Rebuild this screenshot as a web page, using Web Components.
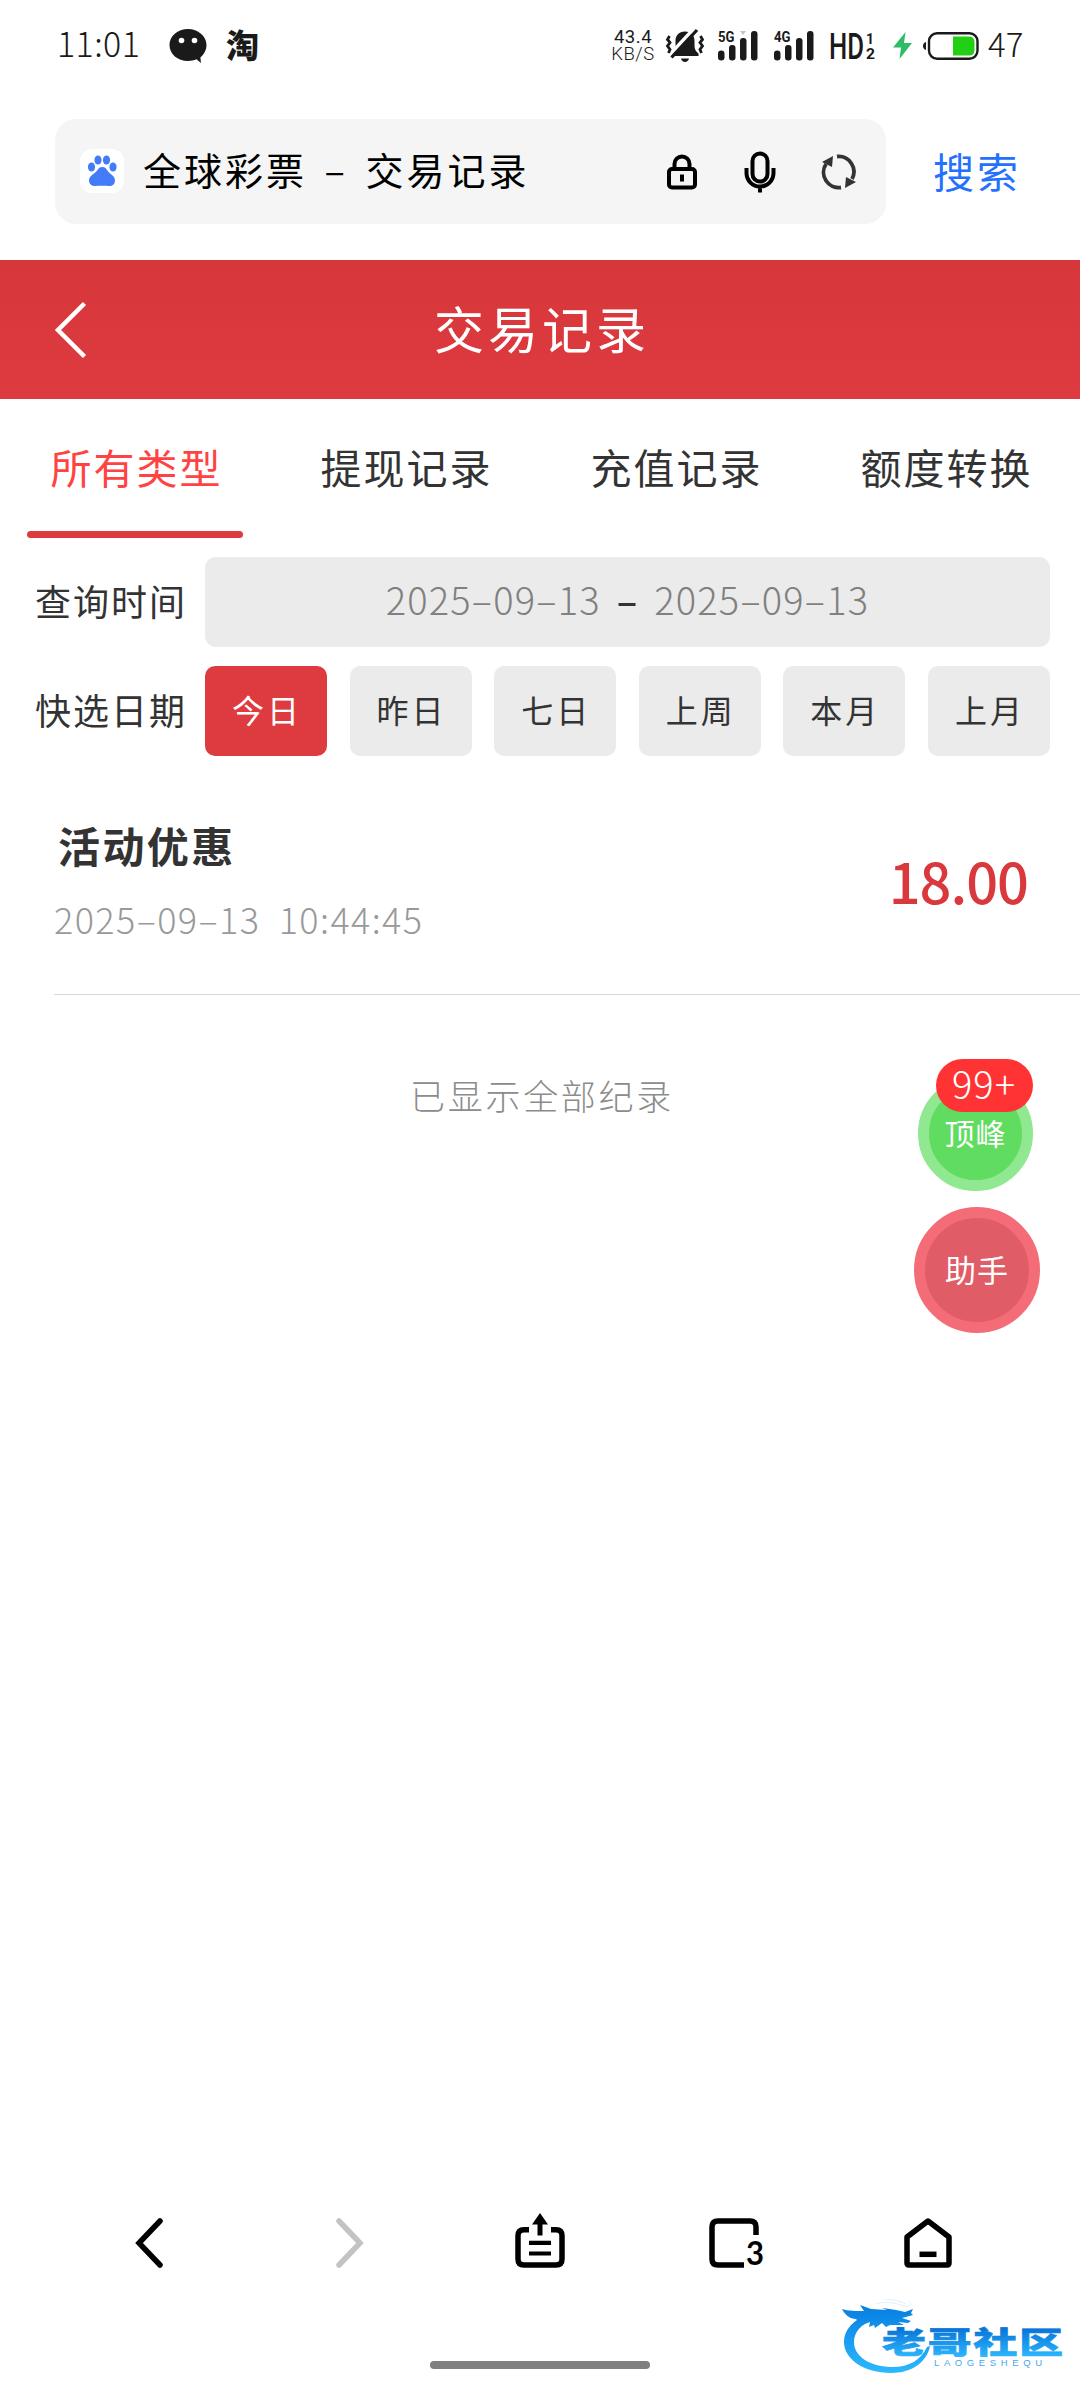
<!DOCTYPE html>
<html lang="zh-CN">
<head>
<meta charset="utf-8">
<title>交易记录</title>
<style>
  body {
    margin: 0;
    width: 1080px;
    height: 2400px;
    overflow: hidden;
    background: #fff;
    color: #333;
    font-family: "Noto Sans CJK SC", sans-serif;
    line-height: 1;
  }
</style>
</head>
<body>
<app-screen>
  <status-bar slot="top" time="11:01" speed="43.4" battery="47"></status-bar>
  <address-bar slot="top" action="搜索">全球彩票 – 交易记录</address-bar>

  <page-header>交易记录</page-header>
  <tab-bar>
    <tab-item active>所有类型</tab-item>
    <tab-item>提现记录</tab-item>
    <tab-item>充值记录</tab-item>
    <tab-item>额度转换</tab-item>
  </tab-bar>
  <filter-row label="查询时间">
    <date-range from="2025–09–13" to="2025–09–13"></date-range>
  </filter-row>
  <filter-row label="快选日期">
    <quick-date active>今日</quick-date>
    <quick-date>昨日</quick-date>
    <quick-date>七日</quick-date>
    <quick-date>上周</quick-date>
    <quick-date>本月</quick-date>
    <quick-date>上月</quick-date>
  </filter-row>
  <record-item name="活动优惠" time="2025–09–13 10:44:45" amount="18.00"></record-item>
  <list-end>已显示全部纪录</list-end>

  <float-stack slot="overlay">
    <float-button color="green" badge="99+">顶峰</float-button>
    <float-button color="red">助手</float-button>
  </float-stack>
  <browser-nav slot="bottom" tabs="3"></browser-nav>
  <community-logo slot="overlay"></community-logo>
</app-screen>

<script>
class BaseElement extends HTMLElement {
  constructor() {
    super();
    this._shadowRoot = this.attachShadow({ mode: "open" });
  }

  connectedCallback() {
    this._shadowRoot.innerHTML = this.template();
  }

  attr(name) {
    return this.getAttribute(name) || "";
  }
}

class AppScreen extends BaseElement {
  template() {
    return `
      <style>
        :host {
          display: flex;
          flex-direction: column;
          position: relative;
          width: 1080px;
          height: 2400px;
        }
        main { flex: 1; }
      </style>
      <slot name="top"></slot>
      <main><slot></slot></main>
      <slot name="bottom"></slot>
      <slot name="overlay"></slot>
    `;
  }
}

class SignalBars extends BaseElement {
  template() {
    const mark = this.hasAttribute("mark")
      ? `<path d="M22 4h6l-3 4z" fill="#c4c4c4"/>`
      : "";
    return `
      <style>
        :host { display: block; width: 41px; height: 38px; }
        svg { display: block; overflow: visible; }
      </style>
      <svg width="41" height="38" viewBox="0 0 41 38" fill="#1a1a1a">
        <rect x="0" y="23.500" width="6.500" height="10" rx="3.200"/>
        <rect x="11" y="18" width="6.500" height="15.500" rx="3"/>
        <rect x="22" y="11" width="6.500" height="22.500" rx="3"/>
        <rect x="33" y="4" width="6.500" height="29.500" rx="3"/>
        ${mark}
        <text x="0" y="14.500" font-family="Roboto" font-size="14.500" font-weight="700" textLength="16.500" lengthAdjust="spacingAndGlyphs">${this.attr("network")}</text>
      </svg>
    `;
  }
}

class StatusBar extends BaseElement {
  template() {
    return `
      <style>
        :host {
          display: flex;
          justify-content: space-between;
          align-items: center;
          box-sizing: border-box;
          height: 91px;
          padding: 0 56px 0 57px;
          color: #1a1a1a;
        }
        .group { display: flex; align-items: center; }
        svg { display: block; overflow: visible; }
        .time { width: 112px; font-size: 34px; font-weight: 300; letter-spacing: 0.4px; margin-top: -5px; }
        .tao { margin-left: 19px; font-size: 33px; font-weight: 900; margin-top: -3px; }
        .speed {
          display: flex;
          flex-direction: column;
          align-items: center;
          width: 46px;
          font-family: Roboto, sans-serif;
          font-size: 18.500px;
          line-height: 17px;
        }
        .speed span { letter-spacing: 0.5px; }
        .speed span + span { font-size: 18.500px; font-weight: 300; }
        .bell { margin-left: 10px; }
        signal-bars { margin-left: 14px; }
        signal-bars + signal-bars { margin-left: 15px; }
        .hd { margin-left: 15px; }
        .bolt { margin-left: 18px; }
        .battery { margin-left: 11px; }
        .level { width: 36px; margin-left: 9px; margin-top: -5px; font-size: 33px; font-weight: 300; white-space: nowrap; }
      </style>
      <div class="group">
        <span class="time">${this.attr("time")}</span>
        <svg width="38" height="36" viewBox="0 0 38 36">
          <path d="M19 1C8.500 1 .5 8 .5 17S8.500 33 19 33c3 0 6-.6 8.500-1.700L32 35l-.6-5.500C35 26.500 37.500 22 37.500 17 37.500 8 29 1 19 1z" fill="#1a1a1a"/>
          <circle cx="12.500" cy="12.500" r="2.800" fill="#fff"/>
          <circle cx="25.500" cy="12.500" r="2.800" fill="#fff"/>
        </svg>
        <span class="tao">淘</span>
      </div>
      <div class="group">
        <div class="speed"><span>${this.attr("speed")}</span><span>KB/S</span></div>
        <svg class="bell" width="38" height="34" viewBox="0 0 38 34" fill="#1a1a1a">
          <path d="M19 2.500c-6 0-9.500 4-9.500 9v5c0 4-1.500 6-4 8V27h27v-2.500c-2.500-2-4-4-4-8v-5c0-5-3.500-9-9.500-9z"/>
          <path d="M15 29.500h8c-.5 2.200-2 3.500-4 3.500s-3.500-1.300-4-3.500z"/>
          <path d="M3 26.500L28.500 -1" stroke="#fff" stroke-width="3.500"/>
          <path d="M5.500 28.500L31 1" stroke="#1a1a1a" stroke-width="3.200"/>
          <path d="M3.500 7l-2 3.500 2.500 3L1.500 17 4 20.500 2.500 24M34.500 7l2 3.500-2.500 3 2.500 3.500-2.500 3.500 1.500 3.500" fill="none" stroke="#1a1a1a" stroke-width="2.800"/>
        </svg>
        <signal-bars network="5G" mark></signal-bars>
        <signal-bars network="4G"></signal-bars>
        <svg class="hd" width="45" height="46" viewBox="0 0 45 46" fill="#1a1a1a" font-family="Roboto" font-weight="700">
          <text x="-1" y="36" font-size="36" font-weight="500" textLength="35" lengthAdjust="spacingAndGlyphs">HD</text>
          <text x="36" y="21" font-size="15" textLength="8" lengthAdjust="spacingAndGlyphs">1</text>
          <text x="36" y="36" font-size="15" textLength="9" lengthAdjust="spacingAndGlyphs">2</text>
        </svg>
        <svg class="bolt" width="19" height="27" viewBox="0 0 19 27">
          <path d="M12.500 0L0 15.500h8L6.500 27 19 11h-8z" fill="#2dbd66"/>
        </svg>
        <svg class="battery" width="56" height="28" viewBox="0 0 56 28">
          <path d="M3 10v8c-2-.5-3-2-3-4s1-3.500 3-4z" fill="#1a1a1a"/>
          <rect x="6" y="1.200" width="48.500" height="25.500" rx="8" fill="#fff" stroke="#1a1a1a" stroke-width="2.400"/>
          <path d="M30 4.500h16q5.500 0 5.500 5.500v8q0 5.500-5.500 5.500H30z" fill="#22cf14"/>
        </svg>
        <span class="level">${this.attr("battery")}</span>
      </div>
    `;
  }
}

class AddressBar extends BaseElement {
  template() {
    return `
      <style>
        :host {
          display: flex;
          align-items: center;
          box-sizing: border-box;
          height: 169px;
          padding: 28px 59px 36px 55px;
        }
        .field {
          display: flex;
          align-items: center;
          box-sizing: border-box;
          width: 832px;
          height: 105px;
          padding: 0 29px 0 25px;
          border-radius: 21px;
          background: #f5f5f5;
        }
        svg { display: block; flex: none; }
        .engine { width: 44px; height: 44px; border-radius: 12px; background: #fff; margin-top: -2px; }
        .title { flex: 1; margin: -6px 0 0 19px; color: #000; font-size: 38px; letter-spacing: 3px; word-spacing: 6px; white-space: nowrap; }
        .mic { margin: 0 45px 0 47px; }
        .action { margin: -3px 0 0 47px; color: #2470ff; font-size: 41px; letter-spacing: 3px; white-space: nowrap; }
      </style>
      <div class="field">
        <svg class="engine" viewBox="0 0 44 44" fill="#447cf8">
          <ellipse cx="11.500" cy="18" rx="3.600" ry="4.600"/>
          <ellipse cx="18" cy="11" rx="3.600" ry="4.600"/>
          <ellipse cx="26.500" cy="11" rx="3.600" ry="4.600"/>
          <ellipse cx="33" cy="18" rx="3.600" ry="4.600"/>
          <path d="M22.300 18c3 0 4.200 2.200 5.700 4.200 2 2.700 7 4.800 7 9.300 0 4-3 5.700-6 5.500-4-.3-9.500-.3-13.500 0-3 .2-6.500-1.500-6.500-5.500 0-4.500 5-6.600 7.500-9.300 1.700-2 2.800-4.200 5.800-4.200z"/>
        </svg>
        <span class="title"><slot></slot></span>
        <svg width="30" height="36" viewBox="0 0 30 36" fill="none" stroke="#000" stroke-width="4">
          <rect x="2" y="15" width="26" height="18.500" rx="3"/>
          <path d="M7.500 15v-5a7.500 7.500 0 0 1 15 0v5M15 20.500v7"/>
        </svg>
        <svg class="mic" width="32" height="42" viewBox="0 0 32 42" fill="none" stroke="#000" stroke-width="4">
          <rect x="8.500" y="2.500" width="15" height="28" rx="7.500"/>
          <path d="M2.500 17v5a13.500 13.500 0 0 0 27 0v-5M16 35v6.500"/>
        </svg>
        <svg width="36" height="36" viewBox="0 0 36 36" fill="none" stroke="#333" stroke-width="3.800">
          <path d="M16 2.500A15.300 15.300 0 0 1 31 25M20 33.500A15.300 15.300 0 0 1 5 10"/>
          <path d="M12 2l-1 11L1 8zM24 34l1-11 10 5z" fill="#333" stroke="none"/>
        </svg>
      </div>
      <span class="action">${this.attr("action")}</span>
    `;
  }
}

class PageHeader extends BaseElement {
  template() {
    return `
      <style>
        :host {
          display: grid;
          grid-template-columns: 140px 1fr 140px;
          align-items: center;
          height: 139px;
          background: linear-gradient(#d7363a, #dd3b40);
          color: #fff;
        }
        svg { display: block; margin-left: 54px; }
        h1 {
          margin: -5px 0 0 4px;
          font-size: 50px;
          font-weight: 400;
          letter-spacing: 4px;
          text-align: center;
        }
      </style>
      <svg width="34" height="58" viewBox="0 0 34 58" fill="none" stroke="#fff" stroke-width="4.500">
        <path d="M30.500 2.500L4 29l26.500 26.500"/>
      </svg>
      <h1><slot></slot></h1>
    `;
  }
}

class TabBar extends BaseElement {
  template() {
    return `
      <style>
        :host { display: grid; grid-template-columns: repeat(4, 1fr); height: 139px; }
      </style>
      <slot></slot>
    `;
  }
}

class TabItem extends BaseElement {
  template() {
    return `
      <style>
        :host {
          display: flex;
          flex-direction: column;
          align-items: center;
          justify-content: space-between;
        }
        span { margin-top: 47px; padding-left: 3px; font-size: 41px; letter-spacing: 2px; color: #333; }
        i { width: 216px; height: 7px; border-radius: 4px; }
        :host([active]) span { color: #ff4343; }
        :host([active]) i { background: #dd3b40; }
      </style>
      <span><slot></slot></span>
      <i></i>
    `;
  }
}

class FilterRow extends BaseElement {
  template() {
    return `
      <style>
        :host { display: flex; align-items: center; height: 90px; padding: 19px 30px 0 35px; }
        label { width: 170px; margin-top: -4px; font-size: 36px; letter-spacing: 2px; white-space: nowrap; }
        .content { flex: 1; display: flex; justify-content: space-between; }
      </style>
      <label>${this.attr("label")}</label>
      <div class="content"><slot></slot></div>
    `;
  }
}

class DateRange extends BaseElement {
  template() {
    return `
      <style>
        :host {
          flex: 1;
          display: flex;
          justify-content: center;
          align-items: center;
          gap: 16px;
          height: 90px;
          border-radius: 11px;
          background: #ebebeb;
          font-size: 38px;
        }
        span { margin-top: -7px; color: #808080; font-weight: 300; letter-spacing: 1.200px; }
        b { margin-top: -7px; font-weight: 500; letter-spacing: 1px; }
      </style>
      <span>${this.attr("from")}</span><b>–</b><span>${this.attr("to")}</span>
    `;
  }
}

class QuickDate extends BaseElement {
  template() {
    return `
      <style>
        :host {
          display: flex;
          justify-content: center;
          align-items: center;
          box-sizing: border-box;
          width: 122px;
          height: 90px;
          padding: 0 0 4px 2px;
          border-radius: 10px;
          background: #ebebeb;
          font-size: 32px;
          letter-spacing: 3px;
        }
        :host([active]) { background: #dd3b40; color: #fff; }
      </style>
      <slot></slot>
    `;
  }
}

class RecordItem extends BaseElement {
  template() {
    return `
      <style>
        :host {
          display: flex;
          justify-content: space-between;
          align-items: center;
          box-sizing: border-box;
          height: 239px;
          margin-left: 54px;
          padding: 10px 52px 0 0;
          border-bottom: 1px solid #d8d8d8;
        }
        .name { margin: 0 0 34px 4px; font-size: 42px; font-weight: 700; letter-spacing: 2.400px; }
        .time { font-size: 36px; font-weight: 300; color: #999; letter-spacing: 1.400px; word-spacing: 9px; white-space: pre; }
        .amount { font-size: 56px; font-weight: 500; color: #d9383c; letter-spacing: -1px; margin-top: -1px; }
      </style>
      <div>
        <div class="name">${this.attr("name")}</div>
        <div class="time">${this.attr("time")}</div>
      </div>
      <div class="amount">${this.attr("amount")}</div>
    `;
  }
}

class ListEnd extends BaseElement {
  template() {
    return `
      <style>
        :host {
          display: block;
          padding: 82px 0 0 4px;
          font-size: 35px;
          font-weight: 300;
          letter-spacing: 2.700px;
          text-align: center;
          color: #8c8c8c;
        }
      </style>
      <slot></slot>
    `;
  }
}

class FloatStack extends BaseElement {
  template() {
    return `
      <style>
        :host {
          position: absolute;
          top: 1076px;
          left: 914px;
          display: flex;
          flex-direction: column;
          align-items: center;
          gap: 16px;
          width: 126px;
        }
      </style>
      <slot></slot>
    `;
  }
}

class FloatButton extends BaseElement {
  template() {
    const badge = this.attr("badge");
    return `
      <style>
        :host {
          position: relative;
          display: flex;
          justify-content: center;
          align-items: center;
          box-sizing: border-box;
          width: 126px;
          height: 126px;
          padding-bottom: 3px;
          border: 11px solid #f36c78;
          border-radius: 50%;
          background: #e05c66;
          color: #fff;
          font-size: 31px;
          letter-spacing: 1px;
        }
        :host([color="green"]) {
          width: 115px;
          height: 115px;
          margin-right: 3px;
          border-color: #90e890;
          background: #60dc60;
          font-size: 30px;
        }
        .badge {
          position: absolute;
          top: -28px;
          right: -11px;
          box-sizing: border-box;
          width: 97px;
          height: 53px;
          border-radius: 27px;
          background: #ff3333;
          font-size: 38px;
          font-weight: 300;
          line-height: 47px;
          text-align: center;
          text-indent: -1px;
        }
      </style>
      <slot></slot>
      ${badge ? `<span class="badge">${badge}</span>` : ""}
    `;
  }
}

class BrowserNav extends BaseElement {
  template() {
    return `
      <style>
        :host { display: flex; flex-direction: column; align-items: center; height: 187px; }
        nav { display: flex; align-items: flex-start; width: 100%; height: 148px; }
        svg { display: block; flex: none; overflow: visible; }
        .back { margin-left: 135px; }
        .forward { margin-left: 171px; }
        .share { margin-left: 151px; }
        .tabs { margin-left: 144px; }
        .home { margin-left: 139px; }
        .handle { width: 220px; height: 8px; border-radius: 4px; background: #808080; }
      </style>
      <nav>
        <svg class="back" width="29" height="55" viewBox="0 0 29 55" fill="none" stroke="#000" stroke-width="5.500" stroke-linecap="round">
          <path d="M25 8L4 30l21 22"/>
        </svg>
        <svg class="forward" width="29" height="55" viewBox="0 0 29 55" fill="none" stroke="#c3c3c3" stroke-width="5.500" stroke-linecap="round">
          <path d="M4 8l21 22L4 52"/>
        </svg>
        <svg class="share" width="50" height="55" viewBox="0 0 50 55" fill="none" stroke="#000" stroke-width="5.500">
          <path d="M14 16.800H9q-6 0-6 6V46q0 6 6 6h32q6 0 6-6V22.800q0-6-6-6h-5"/>
          <path d="M25 8v14.500" stroke-width="5"/>
          <path d="M25 0l8 11.500H17z" fill="#000" stroke="none"/>
          <path d="M14 29.800h22M14 40.500h22" stroke-width="4.200"/>
        </svg>
        <svg class="tabs" width="56" height="62" viewBox="0 0 56 62" fill="none" stroke="#000" stroke-width="5.500">
          <path d="M35 52H9q-6 0-6-6V14q0-6 6-6h32q6 0 6 6v8"/>
          <text x="37" y="51.500" font-family="Lato" font-size="33" font-weight="700" fill="#000" stroke="none" textLength="18" lengthAdjust="spacingAndGlyphs">${this.attr("tabs")}</text>
        </svg>
        <svg class="home" width="48" height="55" viewBox="0 0 48 55" fill="none" stroke="#000" stroke-width="5.500" stroke-linejoin="round">
          <path d="M24 8L3 24v26q0 2 2 2h38q2 0 2-2V24z"/>
          <path d="M15.500 41.300h17"/>
        </svg>
      </nav>
      <div class="handle"></div>
    `;
  }
}

// Watermark over the bottom right corner: dragon ring with the site name.
class CommunityLogo extends BaseElement {
  template() {
    return `
      <style>
        :host { position: absolute; left: 840px; top: 2296px; }
        svg { display: block; overflow: visible; }
      </style>
      <svg width="226" height="82" viewBox="0 0 226 82">
        <defs>
          <linearGradient id="ring" gradientUnits="userSpaceOnUse" x1="0" y1="12" x2="0" y2="76">
            <stop offset="0" stop-color="#0880e2"/>
            <stop offset="1" stop-color="#2cb8ff"/>
          </linearGradient>
          <linearGradient id="name" gradientUnits="userSpaceOnUse" x1="0" y1="-24" x2="0" y2="3">
            <stop offset="0" stop-color="#0874d8"/>
            <stop offset="1" stop-color="#2ab4fa"/>
          </linearGradient>
        </defs>
        <path d="M30 18C13 23 4 34 4 46c0 17 20 31 47 31 21 0 36-11 39-27l-3 1c-6 13-18 20-34 20-22 0-39-10-39-25 0-10 7-18 20-22z" fill="url(#ring)"/>
        <path d="M2 13c7 2 13 2 22 2l-4-6 11 4 16 1-5-2c11 1 18 3 23 4l8-3-2 4 2 2-11 3 9 3-3 2-10-1 6 3-14 0-4 2-4-4-7 5-1-3-5 2 1-5-9 3-5-6c-6 0-11-4-14-10z" fill="url(#ring)"/>
        <path d="M36 8c12-4 20 0 29 2 7 1 7-3 4-5M44 4c8-1 16 1 22 4" fill="none" stroke="#d3eafa" stroke-width="0.700"/>
        <text transform="translate(42 56.500) scale(1.460 1)" x="0" y="0" font-family="Noto Sans CJK SC" font-size="30" font-weight="900" fill="url(#name)" stroke="url(#name)" stroke-width="0.700" textLength="124" lengthAdjust="spacing">老哥社区</text>
        <text x="94" y="70" font-family="Liberation Sans" font-size="9.500" fill="#45a8f0" textLength="108" lengthAdjust="spacing">LAOGESHEQU</text>
      </svg>
    `;
  }
}

window.customElements.define("app-screen", AppScreen);
window.customElements.define("signal-bars", SignalBars);
window.customElements.define("status-bar", StatusBar);
window.customElements.define("address-bar", AddressBar);
window.customElements.define("page-header", PageHeader);
window.customElements.define("tab-bar", TabBar);
window.customElements.define("tab-item", TabItem);
window.customElements.define("filter-row", FilterRow);
window.customElements.define("date-range", DateRange);
window.customElements.define("quick-date", QuickDate);
window.customElements.define("record-item", RecordItem);
window.customElements.define("list-end", ListEnd);
window.customElements.define("float-stack", FloatStack);
window.customElements.define("float-button", FloatButton);
window.customElements.define("browser-nav", BrowserNav);
window.customElements.define("community-logo", CommunityLogo);
</script>
</body>
</html>
